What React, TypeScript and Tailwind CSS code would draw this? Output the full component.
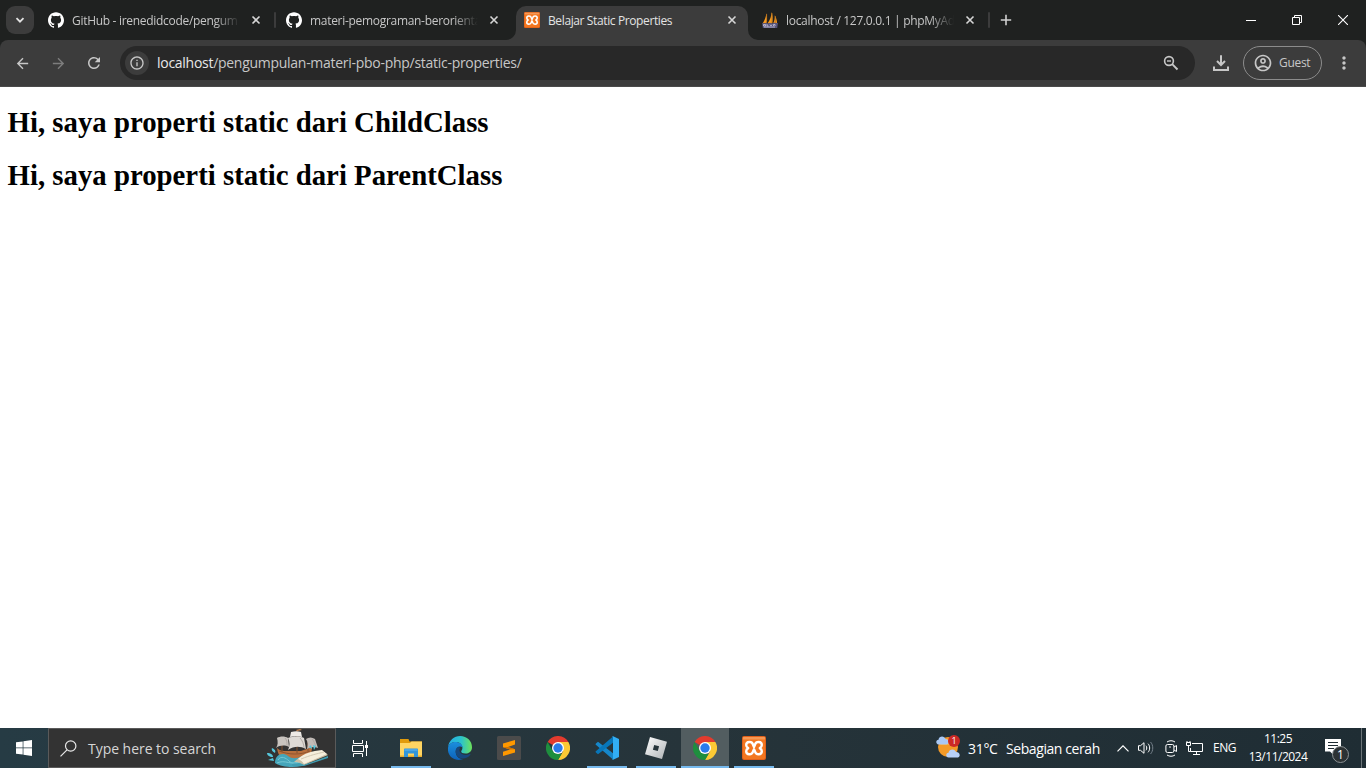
import React from "react";
import { MdArrowBack, MdArrowForward, MdRefresh, MdInfoOutline, MdOutlineAccountCircle, MdMoreVert } from "react-icons/md";
import { SiGithub } from "react-icons/si";

const ui = "font-['Open_Sans','Noto_Sans',sans-serif] whitespace-pre";

function Close() {
  return (
    <svg width="16" height="16" viewBox="0 0 16 16" className="shrink-0">
      <path d="M4.5 4.5l7 7M11.5 4.5l-7 7" stroke="#d6d6d6" strokeWidth="1.6" />
    </svg>
  );
}

function Xampp({ size }: { size: number }) {
  return (
    <svg width={size} height={size} viewBox="0 0 24 24" className="shrink-0">
      <rect width="24" height="24" rx="2" fill="#e0601a" />
      <rect x="1" y="1" width="22" height="22" rx="1.5" fill="#f3761f" />
      <path d="M1 1h22v2.500H1z" fill="#f9b07a" opacity=".6" />
      <path
        d="M12 11L13.200 8.200C14 5.200 19.800 5 19.800 9c0 1.500-.9 2.500-2 3.100 1.100.6 2 1.600 2 3.100 0 4-5.800 3.800-6.600.8L12 13.200l-1.200 2.800c-.8 3-6.600 3.200-6.600-.8 0-1.500.9-2.500 2-3.100-1.100-.6-2-1.600-2-3.100 0-4 5.800-3.800 6.600-.8z"
        fill="none" stroke="#fff" strokeWidth="2.400" strokeLinejoin="round"
      />
    </svg>
  );
}

function PhpMyAdmin() {
  return (
    <svg width="16" height="16" viewBox="0 0 16 16" className="shrink-0">
      <path d="M4.3 1.2C4 5 2.8 8.300.6 11.500h3.800c.8-3.500.8-7-.1-10.300zM9.500 0c0 4-1.400 8-4 11.500h4.600C11 7.500 10.800 3.400 9.500 0zM12.800 3.200c.2 3-.3 5.700-1.700 8.300h4c-.1-3-.8-5.700-2.300-8.300z" fill="#f79a1e" />
      <path d="M4.600 2v9M10 1v10M13.300 4v7" stroke="#b9731f" strokeWidth=".8" />
      <path d="M0 10.700l2 .8 2-.8 2 .8 2-.8 2 .8 2-.8 4 .2-.8 5H.8z" fill="#55547c" />
      <path d="M1.500 12.500h2v1.500h-2zM5 12v2h1.500M8 12.500l1 1.500 1-1.500M11.500 14v-1.500H13V14M2 15h11" fill="none" stroke="#c9c8dd" strokeWidth=".8" />
    </svg>
  );
}

function Tab({ icon, title, active }: { icon: React.ReactNode; title: string; active?: boolean }) {
  return (
    <div className={"relative flex h-[34px] w-[232px] shrink-0 items-center pb-[6px] pl-2 " + (active ? "rounded-t-[10px] bg-[#3c3c3c]" : "")}>
      {active && (
        <>
          <svg className="absolute bottom-0 -left-[10px]" width="10" height="10"><path d="M10 0v10H0A10 10 0 0 0 10 0z" fill="#3c3c3c" /></svg>
          <svg className="absolute -right-[10px] bottom-0" width="10" height="10"><path d="M0 0v10h10A10 10 0 0 1 0 0z" fill="#3c3c3c" /></svg>
        </>
      )}
      {icon}
      <div className={ui + " ml-2 w-[168px] pt-[2px] text-[12px] leading-4 " + (active ? "tracking-[-0.38px] text-[#e3e3e3]" : "tracking-[-0.3px] text-[#c7c7c7] [mask-image:linear-gradient(to_right,black_85%,transparent)]")}>{title}</div>
      <div className="ml-2"><Close /></div>
    </div>
  );
}

function Separator() {
  return <div className="mt-[6px] ml-[2px] h-4 w-[2px] shrink-0 self-start rounded bg-[#3c3c3c]" />;
}

function TabStrip() {
  return (
    <div className="flex h-10 items-end bg-[#1f2120]">
      <div className="mb-[6px] ml-[6px] flex h-7 w-7 items-center justify-center rounded-[9px] bg-[#3c3c3c]">
        <svg width="12" height="12" viewBox="0 0 12 12"><path d="M2.500 4.200L6 7.700l3.500-3.500" fill="none" stroke="#e3e3e3" strokeWidth="1.800" /></svg>
      </div>
      <div className="ml-[6px] flex h-[34px]">
        <Tab icon={<SiGithub size={16} color="#fff" className="shrink-0" />} title="GitHub - irenedidcode/pengum" />
        <Separator />
        <div className="w-[2px]" />
        <Tab icon={<SiGithub size={16} color="#fff" className="shrink-0" />} title="materi-pemograman-berorienta" />
        <div className="w-[6px]" />
        <Tab active icon={<Xampp size={16} />} title="Belajar Static Properties" />
        <div className="w-[6px]" />
        <Tab icon={<PhpMyAdmin />} title="localhost / 127.0.0.1 | phpMyAd" />
        <Separator />
      </div>
      <svg width="12" height="12" viewBox="0 0 12 12" className="mb-[14px] ml-[10px]"><path d="M6 .8v10.400M.8 6h10.400" stroke="#d0d0d0" strokeWidth="1.600" /></svg>
      <div className="ml-auto flex h-10">
        <div className="flex w-[46px] items-center justify-center"><svg width="10" height="10"><path d="M0 5.500h10" stroke="#fff" /></svg></div>
        <div className="flex w-[46px] items-center justify-center"><svg width="10" height="10"><path d="M.5 2.500h7v7h-7zM2.500 2.500v-2h7v7h-2" fill="none" stroke="#fff" /></svg></div>
        <div className="flex w-[46px] items-center justify-center"><svg width="10" height="10"><path d="M0 0l10 10M10 0L0 10" stroke="#fff" strokeWidth="1.100" /></svg></div>
      </div>
    </div>
  );
}

function Toolbar() {
  return (
    <div className="bg-[#1f2120]">
      <div className="flex h-[47px] items-center rounded-t-lg border-b border-[#4a4a4a] bg-[#3c3c3c] pl-[14px] text-[#c7c7c7]">
        <MdArrowBack size={17} />
        <MdArrowForward size={17} className="ml-[19px] text-[#7d7d7d]" />
        <MdRefresh size={18} className="ml-[18px]" />
        <div className="ml-[17px] flex h-[34px] w-[1075px] items-center rounded-full bg-[#282828] pl-[5px]">
          <div className="flex h-6 w-6 items-center justify-center rounded-full bg-[#3c3c3c]"><MdInfoOutline size={16} /></div>
          <div className={ui + " ml-2 text-[14px] leading-5 tracking-[-0.28px] text-[#c7c7c7]"}><span className="text-[#e8e8e8]">localhost</span>/pengumpulan-materi-pbo-php/static-properties/</div>
          <svg width="16" height="16" viewBox="0 0 16 16" className="mr-4 ml-auto">
            <g fill="none" stroke="#c7c7c7"><circle cx="6" cy="6" r="4.400" strokeWidth="1.600" /><path d="M9.200 9.200l5.300 5.300" strokeWidth="1.900" /><path d="M4 6h4" strokeWidth="1.400" /></g>
          </svg>
        </div>
        <svg width="16" height="16" viewBox="0 0 16 16" className="ml-[18px]">
          <path d="M8 .3v9M4 6l4 4 4-4M1 11.500V15h14v-3.500" fill="none" stroke="#c7c7c7" strokeWidth="2" />
        </svg>
        <div className="ml-[14px] flex h-[34px] w-[79px] items-center rounded-full border border-[#8c8c8c] pl-[9px]">
          <MdOutlineAccountCircle size={20} className="shrink-0" />
          <div className={ui + " ml-[6px] text-[12px] leading-4 tracking-[-0.3px]"}>Guest</div>
        </div>
        <MdMoreVert size={20} className="ml-3" />
      </div>
    </div>
  );
}

function Ship() {
  return (
    <svg width="64" height="38" viewBox="0 0 64 38">
      <path d="M11 19c3 3 6 3 10 3h14l11-4c0 7-3 11-9 14H19c-5-3-7-7-8-13z" fill="#b9703d" />
      <path d="M13 22c10 4 22 4 31 0" stroke="#8f5430" strokeWidth="1" fill="none" />
      <path d="M16 10v13M31 2v22M42 9v13" stroke="#80502f" strokeWidth="1" />
      <path d="M11 9c3-2 8-2 11 0l1 9c-4-2-9-2-13 1 2-3 2-6 1-10z" fill="#c9c4bf" />
      <path d="M22 9c5-2 12-2 16 0l2 11c-6-3-12-3-18 1 2-4 2-8 0-12z" fill="#dedad5" />
      <path d="M40 10c3-2 6-2 9 0l3 9c-4-2-7-1-11 1 1-4 1-7-1-10z" fill="#c2bcb8" />
      <path d="M25 3c4-1 7-1 10 0l1 5c-4-1-8-1-12 0z" fill="#eeeae5" />
      <path d="M34 9c2 2 4 6 4 10M19 9c2 2 2 5 2 8M46 10c2 2 3 5 4 8" stroke="#b1aaa6" strokeWidth="1" fill="none" />
      <path d="M30 1l4-1 2 1-5 1z" fill="#c6844e" />
      <path d="M9 34c0-9 8-11 13-7 4 3 9 3 14 0l7 7-7 3c-9 2-21 1-27-3z" fill="#45a5ba" />
      <path d="M12 31c3-5 8-2 11 1s7 2 11 0M11 34c8-4 15 3 23-1" stroke="#75c7d3" strokeWidth="1" fill="none" />
      <path d="M1 24c4 0 6 2 6 4-4 0-6-2-6-4zm5-5c3 1 4 3 3 5-2-1-4-3-3-5zM2 31l5-2 1 3zM43 18l2-2 1 4zm4-2l3 1-2 4z" fill="#56c7dc" />
      <path d="M28 33c8-8 19-10 30-10l4 3-24 10c-3-2-6-3-10-3z" fill="#c8bda3" />
      <path d="M32 30c6-6 14-8 24-9l5 4-23 10c-2-3-4-4-6-5z" fill="#f5eedc" />
      <path d="M35 30c10-4 15-5 23-7" stroke="#d2c8b2" fill="none" />
      <path d="M26 35c5-1 9 0 12 1l24-9v2l-24 8H26z" fill="#3f9eb3" />
    </svg>
  );
}

function Explorer() {
  return (
    <svg width="24" height="24" viewBox="0 0 24 24">
      <path d="M1 3h8.500l1 2.500H23v6H1z" fill="#e19b0b" />
      <path d="M1 7h10l1.500-1.500H23v15H1z" fill="#ffd562" />
      <path d="M1 19.500h22V21H1z" fill="#e9ad2d" />
      <path d="M5 21v-7.500c0-.6.500-1 1-1h12c.5 0 1 .4 1 1V21h-4v-3.500H9V21z" fill="#3296db" />
      <path d="M5.500 13h13v2h-13z" fill="#4ba7e6" />
    </svg>
  );
}

function Edge() {
  return (
    <svg width="24" height="24" viewBox="0 0 24 24">
      <defs>
        <linearGradient id="edgeTop"><stop stopColor="#26aee7" /><stop offset=".55" stopColor="#2bc3cc" /><stop offset="1" stopColor="#6de35b" /></linearGradient>
        <linearGradient id="edgeSide" x1="0" y1="0" x2="0" y2="1"><stop stopColor="#1b8fdd" /><stop offset="1" stopColor="#0d61b9" /></linearGradient>
      </defs>
      <path d="M0 11C1 4.500 6 0 12.200 0 19 0 24 5 24 11.200c0 4-3 6.300-6.500 6.300-3 0-4.300-1-4.300-2 0-.8 1.200-1.300 1.200-3.400C14.600 8.600 11.600 6 8 6 4 6 1 8 0 11z" fill="url(#edgeTop)" />
      <path d="M0 12c.4-3.600 3.400-6 7.500-6 4 0 7 2.500 7 5.300-3-2-6.800 0-6.800 4.400 0 4.300 3.600 7.700 7.500 7.400C8 26-1 21 0 12z" fill="url(#edgeSide)" />
      <path d="M9.500 11.300c-2.800 2-2.400 6.500.4 9.300 3.500 3.400 9.500 2.300 12.400-1.800.4-.7 0-1-.6-.7-4.700 2.100-9.500.2-10.200-3.100-.3-1.300.2-2.200.8-3.200-.7-.9-1.800-1-2.800-.5z" fill="#17487d" />
    </svg>
  );
}

function Sublime() {
  return (
    <svg width="24" height="24" viewBox="0 0 24 24">
      <rect width="24" height="24" rx="1.500" fill="#4b4b4b" />
      <path d="M18 4v4.500L11 11l7 2.200v3.300L6 20v-4.200l7-2.300-7-2.300V7.500z" fill="#ff9800" />
      <path d="M6 11.200l7 2.300 5-.3-7-2.200z" fill="#cf7000" />
    </svg>
  );
}

function Chrome() {
  return (
    <svg width="24" height="24" viewBox="0 0 24 24">
      <path d="M12 12L1.600 6A12 12 0 0 1 22.400 6z" fill="#e33b2e" />
      <path d="M12 6h10.400A12 12 0 0 1 12 24l5.200-9z" fill="#fcc934" />
      <path d="M1.600 6L6.800 15 12 18h5.200-1.700L12 24A12 12 0 0 1 1.600 6z" fill="#1e8e3e" />
      <circle cx="12" cy="12" r="6" fill="#fff" />
      <circle cx="12" cy="12" r="4.700" fill="#2b7bea" />
    </svg>
  );
}

function VsCode() {
  return (
    <svg width="24" height="24" viewBox="0 0 24 24">
      <path d="M1.200 7.200L3 5.700l15 11.600v6.200L.8 8.700c-.4-.4-.3-1 .4-1.500z" fill="#1687ca" />
      <path d="M1.200 16.800L3 18.300 18 6.700V.5L.8 15.300c-.4.4-.3 1 .4 1.500z" fill="#0876b9" />
      <path d="M17.600.1L24 3v18l-6.400 2.900c-.4-.3-.2-.4.400-1V1.100c-.6-.6-.8-.7-.4-1z" fill="#32aef4" />
    </svg>
  );
}

function Roblox() {
  return (
    <svg width="24" height="24" viewBox="0 0 24 24">
      <defs><linearGradient id="rblx" x1="0" y1="0" x2="1" y2="1"><stop stopColor="#fff" /><stop offset="1" stopColor="#aeb2b5" /></linearGradient></defs>
      <path fillRule="evenodd" d="M6 1l17 4.700L18 23 1 18.300zM10.200 9l-1.300 4.800 4.900 1.300 1.300-4.800z" fill="url(#rblx)" />
    </svg>
  );
}

function Task({ children, running, active }: { children: React.ReactNode; running?: boolean; active?: boolean }) {
  return (
    <div className={"flex h-10 w-12 flex-col items-center " + (active ? "bg-[#525d60]" : "")}>
      <div className="flex h-[38px] items-center pt-[2px]">{children}</div>
      {(running || active) && <div className={"h-[2px] bg-[#76b9ed] " + (active ? "w-12" : "w-10")} />}
    </div>
  );
}

function Weather() {
  return (
    <div className="relative h-6 w-[25px]">
      <svg width="25" height="24" viewBox="0 0 25 24">
        <circle cx="12" cy="12" r="10" fill="#f39a28" />
        <path d="M4 10h12c2-5-5-6-5-6z" fill="#ffc04b" opacity=".6" />
        <path d="M2.500 9.500C-.5 9-.5 5 2.500 4.700 3 .5 8.500.300 9.500 4c4 .2 4 5 1 5.500z" fill="#a9c8f5" />
        <path d="M12.500 22.500c-3-.4-3-4.400 0-4.800.6-4 6.500-4.500 7.500-.6 4-.2 5 4.700 2 5.400z" fill="#b7d0f8" />
      </svg>
      <div className={ui + " absolute top-0 left-3 flex h-3 w-3 items-center justify-center rounded-full bg-[#cc2925] text-[9px] leading-3 text-white"}>1</div>
    </div>
  );
}

function Taskbar() {
  return (
    <div className="flex h-10 items-center bg-linear-to-r from-[#263b44] via-[#26343a] via-50% to-[#1f2d34] text-white">
      <div className="flex w-12 justify-center">
        <svg width="16" height="16" viewBox="0 0 16 16"><path d="M0 2.300l6.700-.9v6.200H0zM7.400 1.300L16 0v7.600H7.400zM0 8.300h6.700v6.300L0 13.700zM7.400 8.300H16V16l-8.600-1.200z" fill="#fff" /></svg>
      </div>
      <div className="flex h-10 w-72 items-center border border-[#5a5a5a] bg-[#333] pl-[11px]">
        <svg width="17" height="17" viewBox="0 0 17 17"><g fill="none" stroke="#e8e8e8" strokeWidth="1.200"><circle cx="10.700" cy="6" r="5.200" /><path d="M7 9.800L.5 16.300" /></g></svg>
        <div className={ui + " ml-[11px] pt-[2px] text-[14px] leading-5 tracking-[-0.04px] text-[#d6d6d6]"}>Type here to search</div>
        <div className="mr-[5px] ml-auto"><Ship /></div>
      </div>
      <div className="flex w-12 justify-center">
        <svg width="17" height="17" viewBox="0 0 17 17"><path d="M1.500 0v3.500h9V0M1.500 17v-3.500h9V17M.5 5.500h11v6H.5zM14.500 1v15" fill="none" stroke="#fff" /><path d="M13 5h3v3h-3z" fill="#fff" /></svg>
      </div>
      <div className="ml-[3px] flex gap-px">
        <Task running><Explorer /></Task>
        <Task><Edge /></Task>
        <Task><Sublime /></Task>
        <Task><Chrome /></Task>
        <Task running><VsCode /></Task>
        <Task running><Roblox /></Task>
        <Task active><Chrome /></Task>
        <Task running><Xampp size={24} /></Task>
      </div>
      <div className="ml-auto flex h-10 items-center">
        <div className="mb-[2px]"><Weather /></div>
        <div className={ui + " ml-[7px] w-[38px] pt-[2px] text-[14px] leading-5 tracking-[-0.3px]"}>31°C</div>
        <div className={ui + " w-[111px] pt-[2px] text-[14px] leading-5 tracking-[-0.42px]"}>Sebagian cerah</div>
        <svg width="12" height="7" viewBox="0 0 12 7"><path d="M.5 6.300L6 .8l5.500 5.500" fill="none" stroke="#fff" strokeWidth="1.200" /></svg>
        <svg width="17" height="14" viewBox="0 0 17 14" className="ml-[9px]">
          <path d="M.5 4.700h2l3.500-3v10.600l-3.500-3h-2z" fill="none" stroke="#fff" /><path d="M8 4.700c1 1.200 1 3.400 0 4.600M10 2.700c2.200 2.200 2.200 6.400 0 8.600" fill="none" stroke="#fff" /><path d="M12.500 1c3 3 3 9 0 12" fill="none" stroke="#75808a" />
        </svg>
        <svg width="13" height="17" viewBox="0 0 13 17" className="ml-[10px]">
          <g fill="none" stroke="#fff"><rect x=".9" y="4.500" width="8" height="8" rx="1.500" /><path d="M9 7l2.500-1.500v6L9 10M2 2C4.500.3 7.500.3 10 2M2 15c2.500 1.700 5.500 1.700 8 0" /></g><circle cx="5" cy="7" r=".8" fill="#fff" />
        </svg>
        <svg width="17" height="15" viewBox="0 0 17 15" className="ml-[8px]">
          <path d="M6 2.500h10.500v8H4.500V7M10.500 10.500v3M7 13.500h7M.5 1.500h4v3h-4zM2.500 4.500v6h2" fill="none" stroke="#fff" /><path d="M1 0v2M4 0v2" stroke="#fff" />
        </svg>
        <div className={ui + " ml-[10px] w-[30px] text-[12px] leading-4 tracking-[-0.5px]"}>ENG</div>
        <div className={ui + " flex w-[70px] flex-col items-center text-[12px] leading-[18px] tracking-[-0.5px]"}><div>11:25</div><div>13/11/2024</div></div>
        <div className="relative ml-[12px] h-6 w-[26px]">
          <svg width="17" height="17" viewBox="0 0 17 17" className="mt-[3px]"><path d="M0 0h16v12.500H8.500V16L5 12.500H0z" fill="#fff" /><path d="M3 3.500h10M3 6.500h10M3 9.500h6" stroke="#1f2d34" /></svg>
          <div className={ui + " absolute top-[10px] left-[7px] flex h-[17px] w-[17px] items-center justify-center rounded-full border border-[#8c9295] bg-[#2c3234] text-[12px] leading-none"}>1</div>
        </div>
        <div className="mr-1 ml-[10px] h-10 w-px bg-[#6b7478]" />
      </div>
    </div>
  );
}

export default function App() {
  return (
    <div className="flex h-screen w-screen flex-col overflow-hidden bg-white">
      <TabStrip />
      <Toolbar />
      <main className="flex grow flex-col gap-[21px] pt-[19px] pl-[7.500px] font-['Liberation_Serif',serif] text-[28.800px] leading-8 font-bold text-black">
        <h1>Hi, saya properti static dari ChildClass</h1>
        <h1>Hi, saya properti static dari ParentClass</h1>
      </main>
      <Taskbar />
    </div>
  );
}
